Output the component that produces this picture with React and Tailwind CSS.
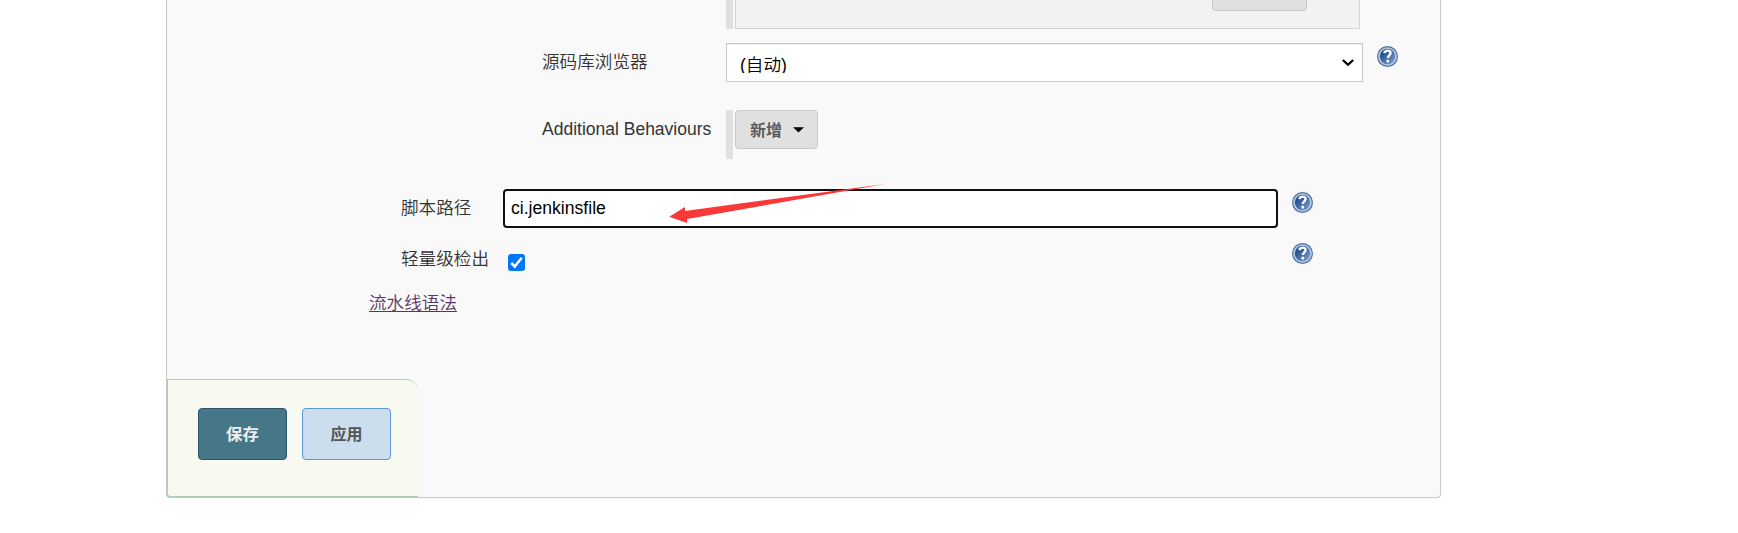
import React from "react";

function HelpIcon() {
  return (
    <svg className="block h-[21px] w-[21px] shrink-0" viewBox="0 0 21 21">
      <defs>
        <linearGradient id="helpFill" x1="0" y1="0" x2="1" y2="1">
          <stop offset="0.25" stopColor="#24508f" />
          <stop offset="1" stopColor="#86a8d4" />
        </linearGradient>
      </defs>
      <circle cx="10.5" cy="10.5" r="10.5" fill="#4a70a8" />
      <circle cx="10.5" cy="10.5" r="8.5" fill="url(#helpFill)" stroke="#b9c9e1" strokeWidth="1.7" />
      <path d="M7.4 7.2C7.6 5.3 9 4.6 10.6 4.6c1.9 0 3 .9 3 2.5 0 2.2-2.8 2.4-2.8 5" fill="none" stroke="#fff" strokeWidth="2.4" />
      <rect x="9.5" y="13.8" width="2.6" height="2.6" rx="0.6" fill="#fff" />
    </svg>
  );
}

function Label({ children, className }) {
  return <div className={`shrink-0 whitespace-nowrap leading-[26px] text-[#333] ${className}`}>{children}</div>;
}

export default function App() {
  return (
    <div className="relative h-[533px] w-full overflow-hidden bg-white font-['Liberation_Sans','Noto_Sans_CJK_SC',sans-serif]">
      <main className="ml-[166px] flex h-[498px] w-[1275px] flex-col rounded-b-[4px] border border-t-0 border-[#c8c8c8] bg-[#f9f9f9]">
        <div className="flex h-[43px] shrink-0 items-start pl-[559px]">
          <div className="h-[29px] w-[7px] bg-[#e0e0e0]" />
          <div className="ml-[2px] flex h-[29px] w-[625px] items-start border border-t-0 border-[#d4d4d4] bg-[#f2f2f2] pl-[476px]">
            <div className="h-[11px] w-[95px] rounded-b-[4px] border border-t-0 border-[#c8c8c8] bg-[#e0e0e0]" />
          </div>
        </div>

        <div className="flex h-[67px] shrink-0 items-start pl-[375px]">
          <Label className="w-[184px] pt-[6px] text-[17.6px] font-[350]">源码库浏览器</Label>
          <div className="flex h-[39px] w-[637px] justify-between border border-[#c8c8c8] bg-white pr-[8px] pl-[13px] shadow-[inset_0_1px_1px_rgba(0,0,0,0.075)]">
            <div className="mt-[8px] h-[21px] overflow-hidden text-[17.6px] leading-[27px] font-[350] text-black">(自动)</div>
            <svg className="mt-[14px] h-[9px] w-[12px]" viewBox="0 0 12 9">
              <path d="M0.8 2 6 6.8l5.2-4.8" fill="none" stroke="#000" strokeWidth="2.3" />
            </svg>
          </div>
          <div className="ml-[14px] pt-[3px]"><HelpIcon /></div>
        </div>

        <div className="flex h-[79px] shrink-0 items-start pl-[375px]">
          <Label className="w-[184px] pt-[6px] text-[17.5px]">Additional Behaviours</Label>
          <div className="h-[49px] w-[7px] bg-[#e0e0e0]" />
          <button className="ml-[2px] flex h-[39px] w-[83px] items-center rounded-[4px] border border-[#c8c8c8] bg-[#e0e0e0] pl-[14px] text-[16px] font-bold text-[#5c5c5c]">
            <span className="pt-[2px]">新增</span>
            <svg className="ml-[11px] h-[6px] w-[11px]" viewBox="0 0 11 6">
              <path d="M0 0.3h11L5.5 5.6z" fill="#000" />
            </svg>
          </button>
        </div>

        <div className="flex h-[54px] shrink-0 items-start pl-[234px]">
          <Label className="w-[102px] pt-[6px] text-[17.6px] font-[350]">脚本路径</Label>
          <div className="flex h-[39px] w-[775px] items-center rounded-[4px] border-2 border-[#101010] bg-white pb-[1px] pl-[6px] text-[17.6px] text-black">ci.jenkinsfile</div>
          <div className="ml-[14px] pt-[3px]"><HelpIcon /></div>
        </div>

        <div className="flex h-[46px] shrink-0 items-start pl-[234px]">
          <Label className="w-[107px] pt-[3px] text-[17.6px] font-[350]">轻量级检出</Label>
          <div className="mt-[11px] h-[17px] w-[17px] rounded-[3px] bg-[#0075ff]">
            <svg className="block h-[17px] w-[17px]" viewBox="0 0 17 17">
              <path d="M3.3 9 6.8 12.5 13.7 3.8" fill="none" stroke="#fff" strokeWidth="2.5" />
            </svg>
          </div>
          <div className="ml-[767px]"><HelpIcon /></div>
        </div>

        <div className="h-[90px] shrink-0 pt-px pl-[202px]">
          <a className="inline-block h-[22px] border-b border-[#5c3566] text-[17.6px] leading-[26px] font-[350] text-[#5c3566]">流水线语法</a>
        </div>

        <footer className="flex h-[118px] w-[251px] shrink-0 items-start gap-[15px] rounded-tr-[12px] rounded-bl-[3px] border border-r-0 border-[#a8cdb9] bg-[#f8f9f1] pt-[28px] pl-[30px]">
          <button className="h-[52px] w-[89px] rounded-[4px] border border-[#2e556b] bg-[#457788] pt-px text-[16.4px] font-bold text-[#eee]">保存</button>
          <button className="h-[52px] w-[89px] rounded-[4px] border border-[#5c98d4] bg-[#ccdded] pt-px text-[16px] font-bold text-[#555]">应用</button>
        </footer>
      </main>
      <svg className="absolute top-[180px] left-[665px] h-[48px] w-[230px]" viewBox="665 180 230 48">
        <path d="M669.3 216.8 685 207v4l200-27-198 35v4z" fill="#fb3838" />
      </svg>
    </div>
  );
}
